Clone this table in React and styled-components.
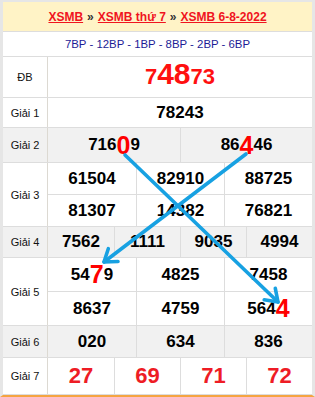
import React from "react";
import styled, { createGlobalStyle } from "styled-components";

const Global = createGlobalStyle`
  html, body { margin: 0; padding: 0; background: #ffffff; }
  body { font-family: "Liberation Sans", Arial, sans-serif; }
`;

const Frame = styled.div`
  position: relative;
  width: 315px;
  height: 397px;
  box-sizing: border-box;
  border-left: 3px solid #e6e6e6;
  border-right: 3px solid #e6e6e6;
  border-top: 2px solid #e6e6e6;
  border-bottom: 2px solid #f5a441;
  display: flex;
  flex-direction: column;
  overflow: hidden;
`;

const Header = styled.div`
  height: 29px;
  background: #fff3c6;
  border-bottom: 1px solid #dddddd;
  display: flex;
  align-items: center;
  justify-content: center;
  font-size: 12px;
  font-weight: bold;
  color: #333;
  gap: 4px;
`;

const Crumb = styled.a`
  color: #f0141e;
  text-decoration: underline;
`;

const Sub = styled.div`
  height: 24px;
  border-bottom: 1px solid #dddddd;
  display: flex;
  align-items: center;
  justify-content: center;
  font-size: 11.4px;
  color: #1c1c96;
  background: #fff;
`;

const Row = styled.div`
  display: grid;
  grid-template-columns: 45px 1fr;
  background: ${(p) => (p.$gray ? "#f1f1f1" : "#ffffff")};
  border-bottom: 1px solid #dddddd;
  height: ${(p) => p.$h}px;
  box-sizing: content-box;
`;

const Label = styled.div`
  border-right: 1px solid #dcd9d2;
  display: flex;
  align-items: center;
  justify-content: center;
  font-size: 11px;
  color: #111;
`;

const Lines = styled.div`
  display: flex;
  flex-direction: column;
`;

const Line = styled.div`
  flex: 1;
  display: grid;
  grid-template-columns: repeat(${(p) => p.$cols}, 1fr);
  & + & {
    border-top: 1px solid #dddddd;
  }
`;

const Cell = styled.div`
  display: flex;
  align-items: center;
  justify-content: center;
  font-size: ${(p) => p.$size || 17}px;
  font-weight: bold;
  color: ${(p) => p.$color || "#000"};
  & + & {
    border-left: 1px solid #dddddd;
  }
`;

const Hot = styled.span`
  color: #ff0000;
  font-size: ${(p) => p.$size || 25}px;
  line-height: 1;
`;

const Special = styled.div`
  display: flex;
  align-items: baseline;
  justify-content: center;
  color: #ff1010;
  font-weight: bold;
  padding-top: 2px;
`;

const Digits = styled.span`
  font-size: ${(p) => p.$size}px;
  line-height: 1;
`;

const Overlay = styled.svg`
  position: absolute;
  left: -3px;
  top: -2px;
  pointer-events: none;
`;

function Num({ v, hot }) {
  if (hot === undefined) return <>{v}</>;
  return (
    <>
      {v.slice(0, hot)}
      <Hot>{v[hot]}</Hot>
      {v.slice(hot + 1)}
    </>
  );
}

function Prize({ label, gray, h, lines, size, color }) {
  return (
    <Row $gray={gray} $h={h}>
      <Label>{label}</Label>
      <Lines>
        {lines.map((ln, i) => (
          <Line key={i} $cols={ln.length}>
            {ln.map((c, j) => (
              <Cell key={j} $size={size} $color={color}>
                {typeof c === "string" ? c : <Num v={c.v} hot={c.hot} />}
              </Cell>
            ))}
          </Line>
        ))}
      </Lines>
    </Row>
  );
}

const BLUE = "#17a1e2";

export default function App() {
  return (
    <>
      <Global />
      <Frame>
        <Header>
          <Crumb>XSMB</Crumb>»<Crumb>XSMB thứ 7</Crumb>»<Crumb>XSMB 6-8-2022</Crumb>
        </Header>
        <Sub>7BP - 12BP - 1BP - 8BP - 2BP - 6BP</Sub>
        <Row $h={40}>
          <Label>ĐB</Label>
          <Special>
            <Digits $size={22}>7</Digits>
            <Digits $size={30}>48</Digits>
            <Digits $size={22}>73</Digits>
          </Special>
        </Row>
        <Prize label="Giải 1" h={29} lines={[["78243"]]} />
        <Prize
          label="Giải 2"
          gray
          h={34}
          lines={[[{ v: "71609", hot: 3 }, { v: "86446", hot: 2 }]]}
        />
        <Prize
          label="Giải 3"
          h={63}
          lines={[
            ["61504", "82910", "88725"],
            ["81307", "14382", "76821"],
          ]}
        />
        <Prize label="Giải 4" gray h={30} lines={[["7562", "1111", "9035", "4994"]]} />
        <Prize
          label="Giải 5"
          h={67}
          lines={[
            [{ v: "5479", hot: 2 }, "4825", "7458"],
            ["8637", "4759", { v: "5644", hot: 3 }],
          ]}
        />
        <Prize label="Giải 6" gray h={31} lines={[["020", "634", "836"]]} />
        <Row $h={36}>
          <Label>Giải 7</Label>
          <Lines>
            <Line $cols={4}>
              <Cell $size={22} $color="#ee1c25">27</Cell>
              <Cell $size={22} $color="#ee1c25">69</Cell>
              <Cell $size={22} $color="#ee1c25">71</Cell>
              <Cell $size={22} $color="#ee1c25">72</Cell>
            </Line>
          </Lines>
        </Row>
        <Overlay width="315" height="397" viewBox="0 0 315 397">
          <g stroke={BLUE} strokeWidth="3.6" strokeLinecap="round" strokeLinejoin="round" fill="none">
            <line x1="125" y1="155" x2="278" y2="302" />
            <polyline points="275.3,288.3 278,302 264.2,299.8" />
            <line x1="246" y1="154" x2="104" y2="262" />
            <polyline points="118,261.5 104,262 108.3,248.7" />
          </g>
        </Overlay>
      </Frame>
    </>
  );
}
